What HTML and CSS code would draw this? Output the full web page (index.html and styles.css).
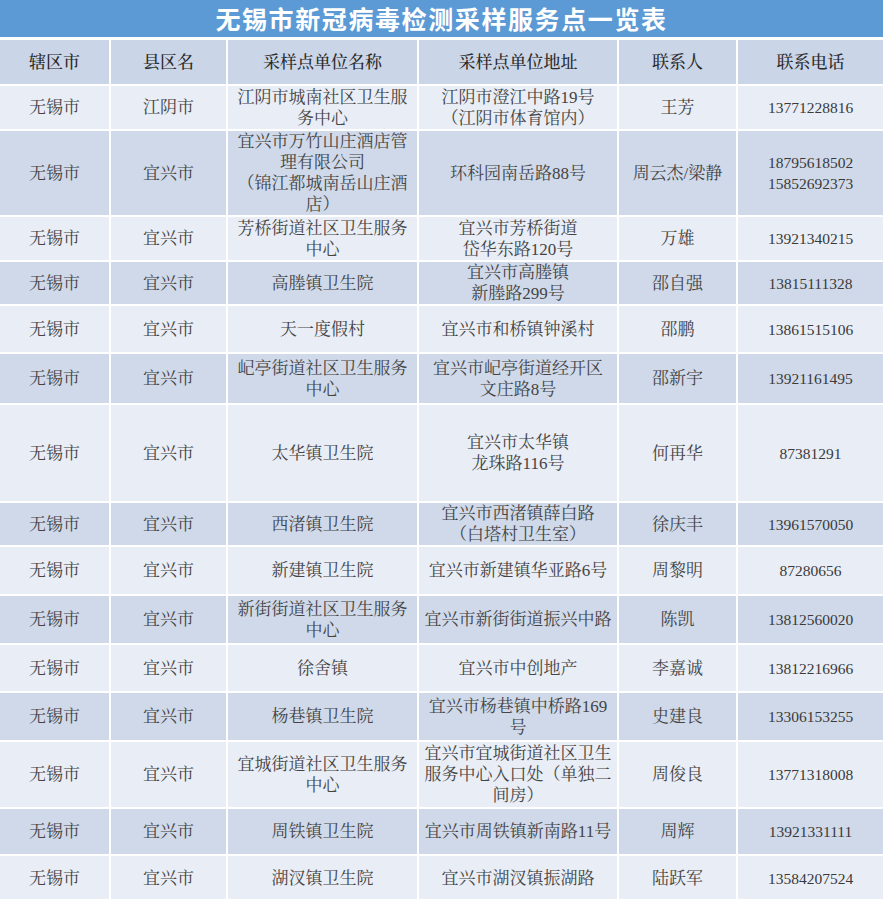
FILE: index.html
```html
<!DOCTYPE html>
<html lang="zh-CN">
<head>
<meta charset="utf-8">
<title>无锡市新冠病毒检测采样服务点一览表</title>
<link rel="stylesheet" href="styles.css">
</head>
<body>
<div class="sheet">
  <h1 class="title">无锡市新冠病毒检测采样服务点一览表</h1>
  <table class="list">
    <colgroup>
      <col class="c1"><col class="c2"><col class="c3"><col class="c4"><col class="c5"><col class="c6">
    </colgroup>
    <thead>
      <tr class="head h46">
        <th>辖区市</th><th>县区名</th><th>采样点单位名称</th><th>采样点单位地址</th><th>联系人</th><th>联系电话</th>
      </tr>
    </thead>
    <tbody>
      <tr class="light h45"><td>无锡市</td><td>江阴市</td><td>江阴市城南社区卫生服务中心</td><td>江阴市澄江中路19号<br>（江阴市体育馆内）</td><td>王芳</td><td class="tel">13771228816</td></tr>
      <tr class="dark h84"><td>无锡市</td><td>宜兴市</td><td>宜兴市万竹山庄酒店管理有限公司<br>（锦江都城南岳山庄酒店）</td><td>环科园南岳路88号</td><td>周云杰/梁静</td><td class="tel">18795618502<br>15852692373</td></tr>
      <tr class="light h45"><td>无锡市</td><td>宜兴市</td><td>芳桥街道社区卫生服务中心</td><td>宜兴市芳桥街道<br>岱华东路120号</td><td>万雄</td><td class="tel">13921340215</td></tr>
      <tr class="dark h43"><td>无锡市</td><td>宜兴市</td><td>高塍镇卫生院</td><td>宜兴市高塍镇<br>新塍路299号</td><td>邵自强</td><td class="tel">13815111328</td></tr>
      <tr class="light h48"><td>无锡市</td><td>宜兴市</td><td>天一度假村</td><td>宜兴市和桥镇钟溪村</td><td>邵鹏</td><td class="tel">13861515106</td></tr>
      <tr class="dark h51"><td>无锡市</td><td>宜兴市</td><td>屺亭街道社区卫生服务中心</td><td>宜兴市屺亭街道经开区<br>文庄路8号</td><td>邵新宇</td><td class="tel">13921161495</td></tr>
      <tr class="light h98"><td>无锡市</td><td>宜兴市</td><td>太华镇卫生院</td><td>宜兴市太华镇<br>龙珠路116号</td><td>何再华</td><td class="tel">87381291</td></tr>
      <tr class="dark h44"><td>无锡市</td><td>宜兴市</td><td>西渚镇卫生院</td><td>宜兴市西渚镇薛白路<br>（白塔村卫生室）</td><td>徐庆丰</td><td class="tel">13961570050</td></tr>
      <tr class="light h49"><td>无锡市</td><td>宜兴市</td><td>新建镇卫生院</td><td>宜兴市新建镇华亚路6号</td><td>周黎明</td><td class="tel">87280656</td></tr>
      <tr class="dark h49"><td>无锡市</td><td>宜兴市</td><td>新街街道社区卫生服务中心</td><td>宜兴市新街街道振兴中路</td><td>陈凯</td><td class="tel">13812560020</td></tr>
      <tr class="light h48"><td>无锡市</td><td>宜兴市</td><td>徐舍镇</td><td>宜兴市中创地产</td><td>李嘉诚</td><td class="tel">13812216966</td></tr>
      <tr class="dark h49"><td>无锡市</td><td>宜兴市</td><td>杨巷镇卫生院</td><td>宜兴市杨巷镇中桥路169号</td><td>史建良</td><td class="tel">13306153255</td></tr>
      <tr class="light h67"><td>无锡市</td><td>宜兴市</td><td>宜城街道社区卫生服务中心</td><td>宜兴市宜城街道社区卫生服务中心入口处（单独二间房）</td><td>周俊良</td><td class="tel">13771318008</td></tr>
      <tr class="dark h47"><td>无锡市</td><td>宜兴市</td><td>周铁镇卫生院</td><td>宜兴市周铁镇新南路11号</td><td>周辉</td><td class="tel">13921331111</td></tr>
      <tr class="light h46"><td>无锡市</td><td>宜兴市</td><td>湖汊镇卫生院</td><td>宜兴市湖汊镇振湖路</td><td>陆跃军</td><td class="tel">13584207524</td></tr>
    </tbody>
  </table>
</div>
</body>
</html>
```

FILE: styles.css
```css
html, body {
  margin: 0;
  padding: 0;
  background: #ffffff;
}

.sheet {
  width: 883px;
}

.title {
  margin: 0 0 3px 0;
  height: 37px;
  line-height: 37px;
  background: #5b9ad4;
  color: #ffffff;
  text-align: center;
  font-family: "Noto Sans CJK SC", "Noto Sans", sans-serif;
  font-weight: 700;
  font-size: 25px;
  letter-spacing: 1.6px;
}

.list {
  width: 883px;
  table-layout: fixed;
  border-collapse: separate;
  border-spacing: 0;
  font-family: "Liberation Serif", "Noto Serif CJK SC", "Noto Sans CJK SC", serif;
  font-size: 17px;
  line-height: 21px;
  color: #444444;
}

.c1 { width: 111px; }
.c2 { width: 117px; }
.c3 { width: 191px; }
.c4 { width: 200px; }
.c5 { width: 119px; }
.c6 { width: 145px; }

.list th,
.list td {
  box-sizing: border-box;
  padding: 0 8px;
  text-align: center;
  vertical-align: middle;
  border-right: 2px solid #ffffff;
  border-bottom: 2px solid #ffffff;
  font-weight: 400;
}

.list td:nth-child(4) {
  padding: 0 4px;
}

.list th:last-child,
.list td:last-child {
  border-right: 0;
}

.list th {
  font-weight: 500;
  color: #2a2a2a;
}

.head th { background: #cad5e8; }
.dark td { background: #cfd9ea; }
.light td { background: #e9edf5; }

.list td.tel {
  font-size: 15.5px;
  color: #3a3a3a;
}

.h43 th, .h43 td { height: 43px; }
.h44 th, .h44 td { height: 44px; }
.h45 th, .h45 td { height: 45px; }
.h46 th, .h46 td { height: 46px; }
.h47 th, .h47 td { height: 47px; }
.h48 th, .h48 td { height: 48px; }
.h49 th, .h49 td { height: 49px; }
.h51 th, .h51 td { height: 51px; }
.h67 th, .h67 td { height: 67px; }
.h84 th, .h84 td { height: 84px; }
.h98 th, .h98 td { height: 98px; }
```
